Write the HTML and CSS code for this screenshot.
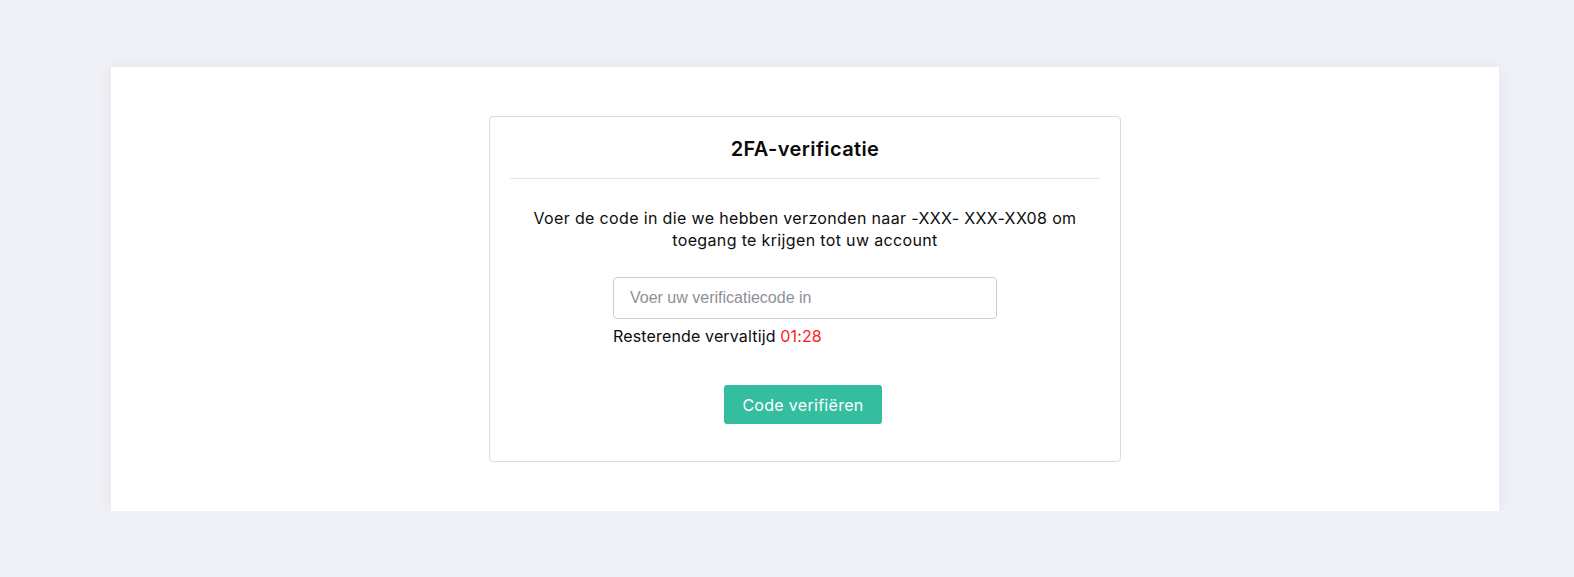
FILE: index.html
```html
<!DOCTYPE html>
<html lang="nl">
<head>
<meta charset="utf-8">
<title>2FA-verificatie</title>
<link rel="stylesheet" href="styles.css">
</head>
<body>
<main class="panel">
  <section class="card">
    <header class="card-header">
      <h1 class="card-title">2FA-verificatie</h1>
    </header>
    <p class="intro">Voer de code in die we hebben verzonden naar -XXX- XXX-XX08 om<br>toegang te krijgen tot uw account</p>
    <form class="verify-form">
      <div class="field">
        <input class="code-input" type="text" placeholder="Voer uw verificatiecode in">
        <div class="timer">Resterende vervaltijd <span class="timer-value">01:28</span></div>
      </div>
      <button class="btn-verify" type="button">Code verifiëren</button>
    </form>
  </section>
</main>
</body>
</html>
```
FILE: styles.css
```css
* { box-sizing: border-box; }

body {
  margin: 0;
  background: #f0f1f6;
  font-family: Inter, "Noto Sans", sans-serif;
  color: #0d0d0d;
}

.panel {
  margin: 67px 75px 0 111px;
  padding: 49px 0;
  background: #fff;
  box-shadow: 0 0 18px rgba(30, 40, 80, 0.06);
}

.card {
  width: 632px;
  margin: 0 auto;
  padding: 0 20px 37px;
  border: 1px solid #dcdcdc;
  border-radius: 4px;
  background: #fff;
}

.card-header {
  padding-top: 17px;
  padding-bottom: 14px;
  border-bottom: 1px solid #e4e4e4;
}

.card-title {
  margin: 0;
  font-size: 20px;
  font-weight: 600;
  line-height: 30px;
  letter-spacing: 0.4px;
  text-align: center;
  color: #0a0a0a;
}

.intro {
  margin: 28px 0 26px;
  font-size: 16px;
  line-height: 22px;
  letter-spacing: 0.35px;
  text-align: center;
}

.verify-form {
  display: flex;
  flex-direction: column;
  align-items: center;
}

.field {
  width: 384px;
  display: flex;
  flex-direction: column;
}

.code-input {
  width: 100%;
  height: 42px;
  padding: 0 16px;
  border: 1px solid #cccccc;
  border-radius: 4px;
  font-family: "Liberation Sans", Arial, sans-serif;
  font-size: 16px;
  color: #333;
  background: #fff;
  outline: none;
}

.code-input::placeholder {
  color: #8c9098;
}

.timer {
  margin-top: 6px;
  font-size: 16px;
  line-height: 22px;
  letter-spacing: 0.15px;
}

.timer-value {
  color: #ff1a1a;
}

.btn-verify {
  margin-top: 38px;
  margin-right: 4px;
  width: 158px;
  height: 39px;
  padding: 0;
  border: none;
  border-radius: 3px;
  background: #35bd9f;
  color: #fff;
  font-family: Inter, "Noto Sans", sans-serif;
  font-size: 16px;
  letter-spacing: 0.3px;
  cursor: pointer;
}
```
